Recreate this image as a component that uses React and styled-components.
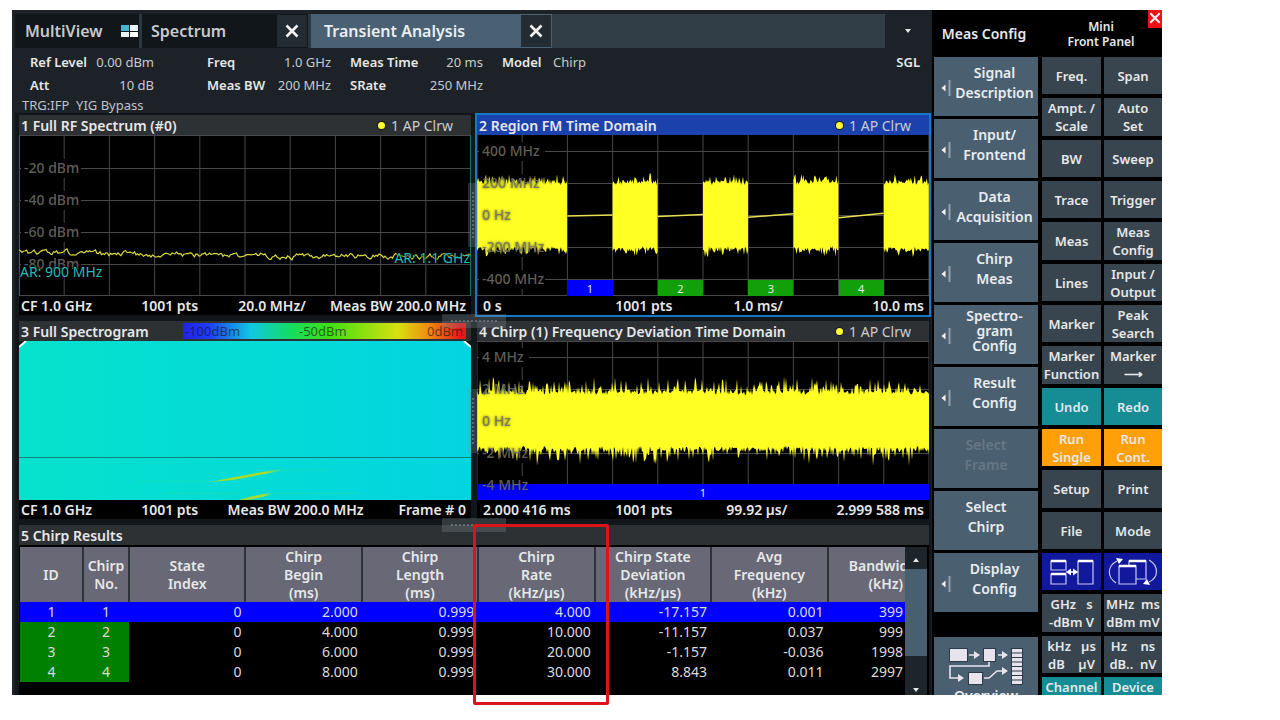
import React from 'react';
import styled, { createGlobalStyle } from 'styled-components';

const GlobalStyle = createGlobalStyle`
  * {
    box-sizing: border-box;
  }

  body {
    margin: 0;
    background: #fff;
    color: #e6e8ea;
    font-family: 'Noto Sans', 'Open Sans', sans-serif;
    font-size: 13px;
  }

  button {
    font-family: inherit;
    color: inherit;
    border: 0;
    padding: 0;
    margin: 0;
  }
`;

const Page = styled.div`
  padding: 10px 118px 25px 12px;
`;

const Window = styled.div`
  display: grid;
  grid-template-columns: minmax(0, 1fr) 108px 122px;
  background: #000;
`;

const Main = styled.main`
  position: relative;
  background: #1c2228;
  padding: 4px 1px 0 3px;
`;

/* ---------- tabs ---------- */

const TabBar = styled.div`
  display: flex;
  height: 34px;
  background: #323e47;
`;

const Tab = styled.div`
  display: flex;
  align-items: stretch;
  justify-content: space-between;
  width: ${(p) => p.$width}px;
  background: ${(p) => (p.$active ? '#4a6073' : '#11161a')};
  border-right: ${(p) => (p.$active ? '0' : '3px solid #2b363f')};
`;

const TabName = styled.button`
  flex: 1;
  display: flex;
  align-items: center;
  justify-content: space-between;
  padding-left: ${(p) => p.$indent || 10}px;
  padding-right: 1px;
  background: none;
  font-size: 16px;
  font-weight: 600;
  color: ${(p) => (p.$active ? '#e9eef2' : '#c6cacd')};
`;

const TabClose = styled.button`
  width: 30px;
  margin: 1px;
  background: #232b33;
  display: flex;
  align-items: center;
  justify-content: center;
`;

const TabMenu = styled.button`
  width: 46px;
  margin-left: auto;
  background: #1c2228;
  display: flex;
  align-items: center;
  justify-content: center;
`;

/* ---------- channel bar ---------- */

const ChannelBar = styled.div`
  display: flex;
  padding: 3px 11px 0 15px;
`;

const FieldList = styled.dl`
  display: grid;
  grid-template-columns: auto auto;
  justify-content: space-between;
  align-content: start;
  column-gap: 6px;
  width: ${(p) => p.$width}px;
  margin: 0 ${(p) => p.$after}px 0 0;
  line-height: 23px;
  white-space: nowrap;

  dt {
    font-weight: 600;
  }

  dd {
    margin: 0;
    text-align: right;
    color: #c8cbce;
  }
`;

const RunState = styled.div`
  margin-left: auto;
  font-weight: 600;
  line-height: 23px;
`;

const StatusLine = styled.div`
  padding-left: 7px;
  line-height: 16px;
  color: #c0c3c6;
`;

/* ---------- result windows ---------- */

const Windows = styled.div`
  display: grid;
  grid-template-columns: minmax(0, 1fr) minmax(0, 1fr);
  gap: 2px;
  padding-left: 2px;
  background: #11171b;
`;

const Panel = styled.section`
  position: relative;
  min-width: 0;
  border: 2px solid ${(p) => (p.$active ? '#1778c8' : '#10161a')};
  background: #000;
`;

const PanelHeader = styled.header`
  display: flex;
  align-items: center;
  height: 20px;
  padding: 0 ${(p) => p.$right || 18}px 0 2px;
  background: ${(p) => (p.$active ? '#1b41ad' : '#2e3134')};
  white-space: nowrap;
`;

const PanelTitle = styled.h2`
  margin: 0;
  font-size: 14px;
  font-weight: 600;
`;

const Trace = styled.span`
  display: flex;
  align-items: center;
  gap: 6px;
  margin-left: auto;
  font-size: 14px;
  color: #c9ccd0;
`;

const TraceDot = styled.i`
  width: 7px;
  height: 7px;
  border-radius: 50%;
  background: #ffff32;
  box-shadow: 0 0 0 1px #1a1a1a;
`;

const Plot = styled.div`
  position: relative;
  height: ${(p) => p.$height}px;

  svg {
    display: block;
    width: 100%;
    height: 100%;
  }
`;

const AxisLabel = styled.span`
  position: absolute;
  left: 5px;
  transform: translateY(-50%);
  font-size: 14px;
  font-weight: 500;
  line-height: 18px;
  color: rgba(112, 112, 104, 0.85);
  text-shadow: 0 0 3px rgba(0, 0, 0, 0.6);
  white-space: nowrap;
`;

const RangeLabel = styled.span`
  position: absolute;
  top: ${(p) => p.$top}px;
  ${(p) => p.$side}: 1px;
  font-size: 14px;
  line-height: 18px;
  color: #22bcb8;
  text-shadow: 0 0 2px #000, 0 0 3px #000;
`;

const Markers = styled.div`
  position: absolute;
  inset: auto 0 0;
  display: grid;
  grid-template-columns: repeat(10, 1fr);
`;

const Marker = styled.span`
  grid-column: ${(p) => p.$column};
  height: 16px;
  background: ${(p) => (p.$selected ? '#0000ff' : '#12a00a')};
  font-size: 11px;
  line-height: 17px;
  text-align: center;
`;

const PanelFooter = styled.footer`
  display: grid;
  grid-template-columns: ${(p) => p.$cols};
  padding: 0 5px 0 ${(p) => (p.$inset ? 6 : 2)}px;
  height: 19px;
  font-size: 14px;
  font-weight: 600;
  line-height: 20px;
  white-space: nowrap;

  span:nth-child(n + 3) {
    text-align: right;
  }
`;

const ColorBar = styled.div`
  flex: 0 0 283px;
  display: grid;
  grid-template-columns: 114px 1fr auto;
  margin-left: auto;
  height: 16px;
  padding: 0 3px 0 2px;
  background: linear-gradient(
    90deg,
    #2222e8 0%,
    #1e3cf0 9%,
    #10c8e4 24%,
    #14dc60 38%,
    #40e010 52%,
    #d8e010 76%,
    #f08a10 87%,
    #e81818 98%
  );
  font-size: 13px;
  line-height: 17px;
  color: rgba(20, 20, 30, 0.65);
`;

const Splitter = styled.div`
  position: absolute;
  z-index: 2;
  display: flex;
  align-items: center;
  justify-content: center;
  background: rgba(130, 140, 145, 0.3);
  width: ${(p) => (p.$vertical ? 10 : 64)}px;
  height: ${(p) => (p.$vertical ? 64 : 14)}px;
  ${(p) => (p.$vertical ? 'right: -7px; top: 68px;' : 'right: -35px; bottom: -13px;')}

  &::after {
    content: '';
    width: ${(p) => (p.$vertical ? 0 : 46)}px;
    height: ${(p) => (p.$vertical ? 46 : 0)}px;
    border: 0 dotted rgba(190, 195, 200, 0.35);
    border-width: ${(p) => (p.$vertical ? '0 0 0 2px' : '2px 0 0')};
  }
`;

/* ---------- results table ---------- */

const ResultsPanel = styled(Panel)`
  grid-column: 1 / -1;
  border-bottom: 0;
`;

const ResultsBody = styled.div`
  display: flex;
  margin-top: 2px;
  padding: 0 2px 0 1px;
`;

const TableClip = styled.div`
  flex: 1;
  min-width: 0;
  height: 148px;
  overflow: hidden;
`;

const Table = styled.table`
  table-layout: fixed;
  width: 925px;
  border-collapse: collapse;
  font-size: 14px;

  th {
    height: 55px;
    padding: 0;
    border-right: 2px solid #2c3238;
    background: #686876;
    font-size: 14px;
    font-weight: 600;
    line-height: 18px;
    white-space: pre-line;
  }

  td {
    height: 20px;
    padding: 0 4px 0 0;
    line-height: 20px;
    text-align: right;
    color: #dcdcdc;
  }

  td:last-child {
    padding-right: 41px;
  }
`;

const ResultRow = styled.tr`
  background: ${(p) => (p.$selected ? '#0000ff' : '#000')};

  td:nth-child(-n + 2) {
    padding: 0;
    text-align: center;
    background: ${(p) => (p.$selected ? '#0000ff' : '#008000')};
  }
`;

const ScrollBar = styled.div`
  display: flex;
  flex-direction: column;
  justify-content: space-between;
  width: 22px;
  background: #1d242a;
`;

const ScrollButton = styled.button`
  height: ${(p) => p.$height}px;
  background: #1d242a;
`;

const ScrollThumb = styled.div`
  height: 87px;
  margin-bottom: auto;
  background: #485f70;
`;

const Highlight = styled.div`
  position: absolute;
  z-index: 3;
  left: 461px;
  bottom: -10px;
  width: 136px;
  height: 181px;
  border: 3px solid #dc1418;
  border-radius: 2px;
`;

/* ---------- softkeys ---------- */

const Sidebar = styled.aside`
  contain: size;
  overflow: hidden;
  background: #000;
`;

const SidebarTitle = styled.h2`
  position: relative;
  display: flex;
  align-items: center;
  justify-content: center;
  height: 47px;
  margin: 0;
  padding-right: ${(p) => (p.$small ? 0 : 4)}px;
  font-size: ${(p) => (p.$small ? 12 : 14)}px;
  font-weight: 600;
  line-height: 15px;
  text-align: center;
  white-space: pre-line;
`;

const SoftkeyList = styled.div`
  display: flex;
  flex-direction: column;
  gap: 3px;
  padding: 0 2px;
`;

const Softkey = styled.button`
  display: flex;
  align-items: center;
  height: 59px;
  padding-bottom: 8px;
  background: #4a5f70;
  color: ${(p) => (p.$muted ? '#667785' : '#e9edf0')};
  font-size: 14px;
  font-weight: 600;
  line-height: ${(p) => (p.$dense ? 15 : 20)}px;
  white-space: pre-line;

  svg {
    flex: 0 0 18px;
    margin: 10px 0 0 -1px;
  }

  span {
    flex: 1;
    text-align: center;
  }
`;

const OverviewKey = styled(Softkey)`
  flex-direction: column;
  height: 80px;
  margin-top: 22px;
  padding: 9px 0 0;

  svg {
    flex: 0 0 40px;
    margin: 0;
  }

  span {
    flex: 0 0 20px;
  }
`;

const KeyGrid = styled.div`
  display: grid;
  grid-template-columns: 59px 58px;
  grid-auto-rows: 37px 38px 37px;
  column-gap: 3px;
  row-gap: 4px;
  padding-left: 2px;
`;

const keyColors = {
  teal: '#168c94',
  orange: '#ffa008',
  blue: '#12189c',
};

const Key = styled.button`
  display: flex;
  align-items: center;
  justify-content: center;
  background: ${(p) => keyColors[p.$tone] || '#38454e'};
  font-size: 13px;
  font-weight: 600;
  line-height: 18px;
  white-space: pre;
`;

const CloseBadge = styled.button`
  position: absolute;
  top: 0;
  right: 0;
  width: 14px;
  height: 18px;
  overflow: hidden;
  background: #ee1018;
`;

/* ---------- data ---------- */

const WIDTH = 452;

const chirps = [
  ['1', '1', '0', '2.000', '0.999', '4.000', '-17.157', '0.001', '399'],
  ['2', '2', '0', '4.000', '0.999', '10.000', '-11.157', '0.037', '999'],
  ['3', '3', '0', '6.000', '0.999', '20.000', '-1.157', '-0.036', '1998'],
  ['4', '4', '0', '8.000', '0.999', '30.000', '8.843', '0.011', '2997'],
];

const columns = [
  'ID',
  'Chirp\nNo.',
  'State\nIndex',
  'Chirp\nBegin\n(ms)',
  'Chirp\nLength\n(ms)',
  'Chirp\nRate\n(kHz/µs)',
  'Chirp State\nDeviation\n(kHz/µs)',
  'Avg\nFrequency\n(kHz)',
  'Bandwidth\n(kHz)',
];

const softkeys = [
  { label: 'Signal\nDescription', arrow: true },
  { label: 'Input/\nFrontend', arrow: true },
  { label: 'Data\nAcquisition', arrow: true },
  { label: 'Chirp\nMeas', arrow: true },
  { label: 'Spectro-\ngram\nConfig', arrow: true, dense: true },
  { label: 'Result\nConfig', arrow: true },
  { label: 'Select\nFrame', muted: true },
  { label: 'Select\nChirp' },
  { label: 'Display\nConfig', arrow: true },
];

const keys = [
  ['Freq.'], ['Span'],
  ['Ampt. /\nScale'], ['Auto\nSet'],
  ['BW'], ['Sweep'],
  ['Trace'], ['Trigger'],
  ['Meas'], ['Meas\nConfig'],
  ['Lines'], ['Input /\nOutput'],
  ['Marker'], ['Peak\nSearch'],
  ['Marker\nFunction'], ['Marker\n⟶'],
  ['Undo', 'teal'], ['Redo', 'teal'],
  ['Run\nSingle', 'orange'], ['Run\nCont.', 'orange'],
  ['Setup'], ['Print'],
  ['File'], ['Mode'],
  ['split', 'blue'], ['rotate', 'blue'],
  ['GHz   s\n-dBm V'], ['MHz  ms\ndBm mV'],
  ['kHz   µs\ndB    µV'], ['Hz    ns\ndB..  nV'],
  ['Channel\nPreset', 'teal'], ['Device\nPreset', 'teal'],
];

// small seeded generator so the traces look the same on every render
const random = (seed) => {
  let s = seed;
  return () => {
    s = (s * 16807) % 2147483647;
    return s / 2147483647;
  };
};

const noiseFloor = () => {
  const rnd = random(42);
  let d = '';
  let drift = 0;
  for (let x = 0; x <= WIDTH; x += 1.5) {
    const base = 117 + Math.min(x / 60, 4);
    drift = drift * 0.6 + (rnd() - 0.5) * 4.5;
    d += `${x ? 'L' : 'M'}${x} ${(base + drift).toFixed(1)}`;
  }
  return d;
};

const noiseBand = (from, to, top, bottom, spread, seed) => {
  const rnd = random(seed);
  const up = [];
  const down = [];
  for (let x = from; x <= to; x += 1) {
    up.push(`${x} ${(top - spread * rnd() ** 4 + rnd() * 5).toFixed(1)}`);
    down.push(`${x} ${(bottom + spread * rnd() ** 4 - rnd() * 5).toFixed(1)}`);
  }
  return `M${up.join('L')}L${down.reverse().join('L')}Z`;
};

/* ---------- drawings ---------- */

const Cross = ({ size = 14, weight = 2.6 }) => (
  <svg width={size} height={size} viewBox="0 0 14 14" stroke="#f2f2f2" strokeWidth={weight}>
    <path d="M1.5 1.5L12.5 12.5M12.5 1.5L1.5 12.5" />
  </svg>
);

const Triangle = ({ up }) => (
  <svg width="8" height="6" viewBox="0 0 8 6" fill="#e6e6e6">
    <path d={up ? 'M1 5L4 1L7 5Z' : 'M1 1L4 5L7 1Z'} />
  </svg>
);

const MultiViewIcon = () => (
  <svg width="17" height="12" viewBox="0 0 17 12">
    <rect x="0" y="0" width="8" height="6" fill="#48b4d4" />
    <rect x="9" y="0" width="8" height="6" fill="#e8f2f4" />
    <rect x="0" y="7" width="8" height="5" fill="#e8f2f4" />
    <rect x="9" y="7" width="8" height="5" fill="#fff" />
  </svg>
);

const SubmenuArrow = () => (
  <svg width="18" height="18" viewBox="0 0 18 18">
    <path d="M8.500 9L12.500 5.500V12.500Z" fill="#f4f4f4" />
    <path d="M16.500 1V17" stroke="#93a2ae" strokeWidth="2" />
  </svg>
);

const OverviewIcon = () => (
  <svg width="78" height="40" viewBox="0 0 78 40">
    <g fill="#e8e4ee" stroke="#2c3a48" strokeWidth="1">
      <rect x="2.500" y="2.500" width="18" height="13" />
      <rect x="36.500" y="2.500" width="12" height="13" />
      <rect x="21.500" y="26.500" width="14" height="12" />
      <rect x="64.500" y="2.500" width="11" height="36" />
    </g>
    <path d="M65 7H75M65 11.500H75M65 16H75M65 20.500H75M65 25H75M65 29.500H75M65 34H75" stroke="#2c3a48" />
    <g fill="none" stroke="#e8e4ee" strokeWidth="1.600">
      <path d="M22 9H28M51 9H56M42 16V20H3V32H12M37 32H42L50 25H56" />
    </g>
    <path d="M27 5L33 9L27 13ZM55 5L61 9L55 13ZM11 28L17 32L11 36ZM55 21L61 25L55 29Z" fill="#e8e4ee" />
  </svg>
);

const SplitIcon = () => (
  <svg width="44" height="26" viewBox="0 0 44 26" fill="none" stroke="#c5caf0" strokeWidth="1.200">
    <path d="M1 2H16V11H1ZM1 15H16V25H1ZM28 2H43V25H28ZM16 13H28" />
    <path d="M1 2H16M1 15H16M28 2H43" stroke="#fff" strokeWidth="2.400" />
    <path d="M20 13H25" strokeWidth="2" />
    <path d="M16 13L21 9.500V16.500ZM28 13L23 9.500V16.500Z" fill="#fff" stroke="none" />
  </svg>
);

const RotateIcon = () => (
  <svg width="50" height="28" viewBox="0 0 50 28" fill="none" stroke="#c5caf0" strokeWidth="1.200">
    <path d="M11 8H28V26H11ZM21 8V3H38V21H28" />
    <path d="M11 8H28M21 3H38" stroke="#fff" strokeWidth="2.400" />
    <path d="M8 25C-1 19 -1 8 9 3M41 2C51 8 51 19 41 24" />
    <path d="M8 0L15 1L11 6ZM42 27L35 26L39 21Z" fill="#fff" stroke="none" />
  </svg>
);

const GridLines = ({ height, rows }) => (
  <g stroke="#484848" strokeWidth="1">
    {Array.from({ length: 11 }, (_, i) => (
      <line key={`v${i}`} x1={(WIDTH / 10) * i} x2={(WIDTH / 10) * i} y1="0" y2={height} />
    ))}
    {rows.map((y) => (
      <line key={y} x1="0" x2={WIDTH} y1={y + 0.5} y2={y + 0.5} />
    ))}
  </g>
);

// keeps the grid from running through the axis labels
const LabelGaps = ({ rows, width }) =>
  rows.map((y) => <rect key={y} x="2" y={y - 9} width={width} height="19" fill="#000" />);

const AxisLabels = ({ labels, rows }) =>
  labels.map((label, i) => (
    <AxisLabel key={label} style={{ top: rows[i] }}>
      {label}
    </AxisLabel>
  ));

const Footer = ({ items, cols, inset }) => (
  <PanelFooter $cols={cols} $inset={inset}>
    {items.map((item) => (
      <span key={item}>{item}</span>
    ))}
  </PanelFooter>
);

const TraceLabel = () => (
  <Trace>
    <TraceDot />1 AP Clrw
  </Trace>
);

/* ---------- windows ---------- */

const SpectrumPanel = () => {
  const rows = [33, 65, 97, 129];
  return (
    <Panel>
      <PanelHeader>
        <PanelTitle>1 Full RF Spectrum (#0)</PanelTitle>
        <TraceLabel />
      </PanelHeader>
      <Plot $height={161}>
        <svg viewBox={`0 0 ${WIDTH} 161`} preserveAspectRatio="none">
          <GridLines height={161} rows={[0, ...rows, 160]} />
          <LabelGaps rows={rows} width={60} />
          <path d={`M0.500 0V161M${WIDTH - 0.5} 0V161`} stroke="#1c6f6c" />
          <path d={noiseFloor()} fill="none" stroke="#d8d83c" strokeWidth="1.200" />
        </svg>
        <AxisLabels rows={rows} labels={['-20 dBm', '-40 dBm', '-60 dBm', '-80 dBm']} />
        <RangeLabel $side="left" $top={128}>AR: 900 MHz</RangeLabel>
        <RangeLabel $side="right" $top={114}>AR: 1.1 GHz</RangeLabel>
      </Plot>
      <Footer
        cols="27% 13% 24% 1fr"
        items={['CF 1.0 GHz', '1001 pts', '20.0 MHz/', 'Meas BW 200.0 MHz']}
      />
      <Splitter $vertical />
      <Splitter />
    </Panel>
  );
};

const RegionPanel = () => {
  const rows = [16, 48, 80, 112, 144];
  const div = WIDTH / 10;
  return (
    <Panel $active>
      <PanelHeader $active>
        <PanelTitle>2 Region FM Time Domain</PanelTitle>
        <TraceLabel />
      </PanelHeader>
      <Plot $height={161}>
        <svg viewBox={`0 0 ${WIDTH} 161`} preserveAspectRatio="none">
          <GridLines height={161} rows={[...rows, 160]} />
          <LabelGaps rows={rows} width={66} />
          <g fill="#ffff24">
            <path d={noiseBand(0, div * 2, 45, 116, 8, 11)} />
            {[3, 5, 7, 9].map((n) => (
              <path key={n} d={noiseBand(div * n, div * (n + 1), 45, 116, 8, n * 37)} />
            ))}
          </g>
          <g stroke="#e8e050" strokeWidth="1.500">
            {[2, 4, 6, 8].map((n, i) => (
              <line key={n} x1={div * n} x2={div * (n + 1)} y1={81 + i * 0.6} y2={80 - i * 0.6} />
            ))}
          </g>
        </svg>
        <AxisLabels rows={rows} labels={['400 MHz', '200 MHz', '0 Hz', '-200 MHz', '-400 MHz']} />
        <Markers>
          {[1, 2, 3, 4].map((n) => (
            <Marker key={n} $column={n * 2 + 1} $selected={n === 1}>
              {n}
            </Marker>
          ))}
        </Markers>
      </Plot>
      <Footer inset cols="30% 13% 25% 1fr" items={['0 s', '1001 pts', '1.0 ms/', '10.0 ms']} />
    </Panel>
  );
};

const SpectrogramPanel = () => (
  <Panel>
    <PanelHeader $right={5}>
      <PanelTitle>3 Full Spectrogram</PanelTitle>
      <ColorBar>
        <span>-100dBm</span>
        <span>-50dBm</span>
        <span>0dBm</span>
      </ColorBar>
    </PanelHeader>
    <Plot $height={159}>
      <svg viewBox={`0 0 ${WIDTH} 159`} preserveAspectRatio="none">
        <defs>
          <linearGradient id="floor" x1="0" x2="1">
            <stop offset="0" stopColor="#06e2cc" />
            <stop offset="0.6" stopColor="#04dad8" />
            <stop offset="1" stopColor="#04d4e0" />
          </linearGradient>
          <linearGradient id="streak" x1="0" x2="1">
            <stop offset="0" stopColor="#58e080" stopOpacity="0.3" />
            <stop offset="0.2" stopColor="#a0dc30" />
            <stop offset="0.8" stopColor="#b0dc28" />
            <stop offset="1" stopColor="#58e080" stopOpacity="0.3" />
          </linearGradient>
        </defs>
        <rect width={WIDTH} height="159" fill="url(#floor)" />
        <path d="M120 140.500H190M260 129H310M150 152.500H220M252 152.500H340" stroke="#20e0a8" opacity="0.6" />
        <path d="M187 141.500L212 136.700L262 127.700L262 130L214 139Z" fill="url(#streak)" />
        <path d="M216 160L232 155.500L252 151.500V154L232 158.500Z" fill="url(#streak)" />
        <path d={`M0 116.500H${WIDTH}`} stroke="#108078" />
        <path d={`M0 0H7L0 6ZM${WIDTH} 0H${WIDTH - 7}L${WIDTH} 6Z`} fill="#10181a" />
        <path d={`M0 6L7 0M${WIDTH} 6L${WIDTH - 7} 0`} stroke="#fff" strokeWidth="2" />
      </svg>
    </Plot>
    <Footer
      cols="27% 13% 37% 1fr"
      items={['CF 1.0 GHz', '1001 pts', 'Meas BW 200.0 MHz', 'Frame # 0']}
    />
    <Splitter $vertical />
    <Splitter />
  </Panel>
);

const DeviationPanel = () => {
  const rows = [16, 48, 80, 112, 144];
  return (
    <Panel>
      <PanelHeader>
        <PanelTitle>4 Chirp (1) Frequency Deviation Time Domain</PanelTitle>
        <TraceLabel />
      </PanelHeader>
      <Plot $height={159}>
        <svg viewBox={`0 0 ${WIDTH} 159`} preserveAspectRatio="none">
          <GridLines height={159} rows={[0, ...rows]} />
          <LabelGaps rows={rows} width={50} />
          <path d={noiseBand(0, WIDTH, 49, 110, 15, 77)} fill="#ffff24" />
        </svg>
        <Markers>
          <Marker $column="1 / -1" $selected>
            1
          </Marker>
        </Markers>
        <AxisLabels rows={rows} labels={['4 MHz', '2 MHz', '0 Hz', '-2 MHz', '-4 MHz']} />
      </Plot>
      <Footer
        inset
        cols="30% 13% 26% 1fr"
        items={['2.000 416 ms', '1001 pts', '99.92 µs/', '2.999 588 ms']}
      />
    </Panel>
  );
};

const ChirpResults = () => (
  <ResultsPanel>
    <PanelHeader>
      <PanelTitle>5 Chirp Results</PanelTitle>
    </PanelHeader>
    <ResultsBody>
      <TableClip>
        <Table>
          <colgroup>
            <col width="63" />
            <col width="46" />
          </colgroup>
          <thead>
            <tr>
              {columns.map((name) => (
                <th key={name} scope="col">
                  {name}
                </th>
              ))}
            </tr>
          </thead>
          <tbody>
            {chirps.map((row, i) => (
              <ResultRow key={row[0]} $selected={i === 0}>
                {row.map((value, j) => (
                  <td key={columns[j]}>{value}</td>
                ))}
              </ResultRow>
            ))}
          </tbody>
        </Table>
      </TableClip>
      <ScrollBar>
        <ScrollButton $height={22} aria-label="Scroll up">
          <Triangle up />
        </ScrollButton>
        <ScrollThumb />
        <ScrollButton $height={16} aria-label="Scroll down">
          <Triangle />
        </ScrollButton>
      </ScrollBar>
    </ResultsBody>
  </ResultsPanel>
);

const ChannelInfo = () => (
  <ChannelBar>
    <FieldList $width={124} $after={53}>
      <dt>Ref Level</dt>
      <dd>0.00 dBm</dd>
      <dt>Att</dt>
      <dd>10 dB</dd>
    </FieldList>
    <FieldList $width={124} $after={19}>
      <dt>Freq</dt>
      <dd>1.0 GHz</dd>
      <dt>Meas BW</dt>
      <dd>200 MHz</dd>
    </FieldList>
    <FieldList $width={133} $after={19}>
      <dt>Meas Time</dt>
      <dd>20 ms</dd>
      <dt>SRate</dt>
      <dd>250 MHz</dd>
    </FieldList>
    <FieldList $width={84} $after={0}>
      <dt>Model</dt>
      <dd>Chirp</dd>
    </FieldList>
    <RunState>SGL</RunState>
  </ChannelBar>
);

const keyDrawings = { split: <SplitIcon />, rotate: <RotateIcon /> };

const App = () => {
  return (
    <Page>
      <GlobalStyle />
      <Window>
        <Main>
          <TabBar>
            <Tab $width={127}>
              <TabName>
                MultiView <MultiViewIcon />
              </TabName>
            </Tab>
            <Tab $width={169}>
              <TabName $indent={9}>Spectrum</TabName>
              <TabClose aria-label="Close Spectrum">
                <Cross />
              </TabClose>
            </Tab>
            <Tab $active $width={241}>
              <TabName $active $indent={13}>
                Transient Analysis
              </TabName>
              <TabClose aria-label="Close Transient Analysis">
                <Cross />
              </TabClose>
            </Tab>
            <TabMenu aria-label="More channels">
              <Triangle />
            </TabMenu>
          </TabBar>
          <ChannelInfo />
          <StatusLine>TRG:IFP&nbsp; YIG Bypass</StatusLine>
          <Windows>
            <SpectrumPanel />
            <RegionPanel />
            <SpectrogramPanel />
            <DeviationPanel />
            <ChirpResults />
          </Windows>
          <Highlight />
        </Main>

        <Sidebar>
          <SidebarTitle>Meas Config</SidebarTitle>
          <SoftkeyList>
            {softkeys.map((key) => (
              <Softkey key={key.label} $muted={key.muted} $dense={key.dense} disabled={key.muted}>
                {key.arrow && <SubmenuArrow />}
                <span>{key.label}</span>
              </Softkey>
            ))}
            <OverviewKey>
              <OverviewIcon />
              <span>Overview</span>
            </OverviewKey>
          </SoftkeyList>
        </Sidebar>

        <Sidebar>
          <SidebarTitle $small>
            {'Mini\nFront Panel'}
            <CloseBadge aria-label="Close front panel">
              <Cross size={12} weight={2.4} />
            </CloseBadge>
          </SidebarTitle>
          <KeyGrid>
            {keys.map(([label, tone]) => (
              <Key key={label} $tone={tone} aria-label={keyDrawings[label] ? label : undefined}>
                {keyDrawings[label] || label}
              </Key>
            ))}
          </KeyGrid>
        </Sidebar>
      </Window>
    </Page>
  );
};

export default App;
